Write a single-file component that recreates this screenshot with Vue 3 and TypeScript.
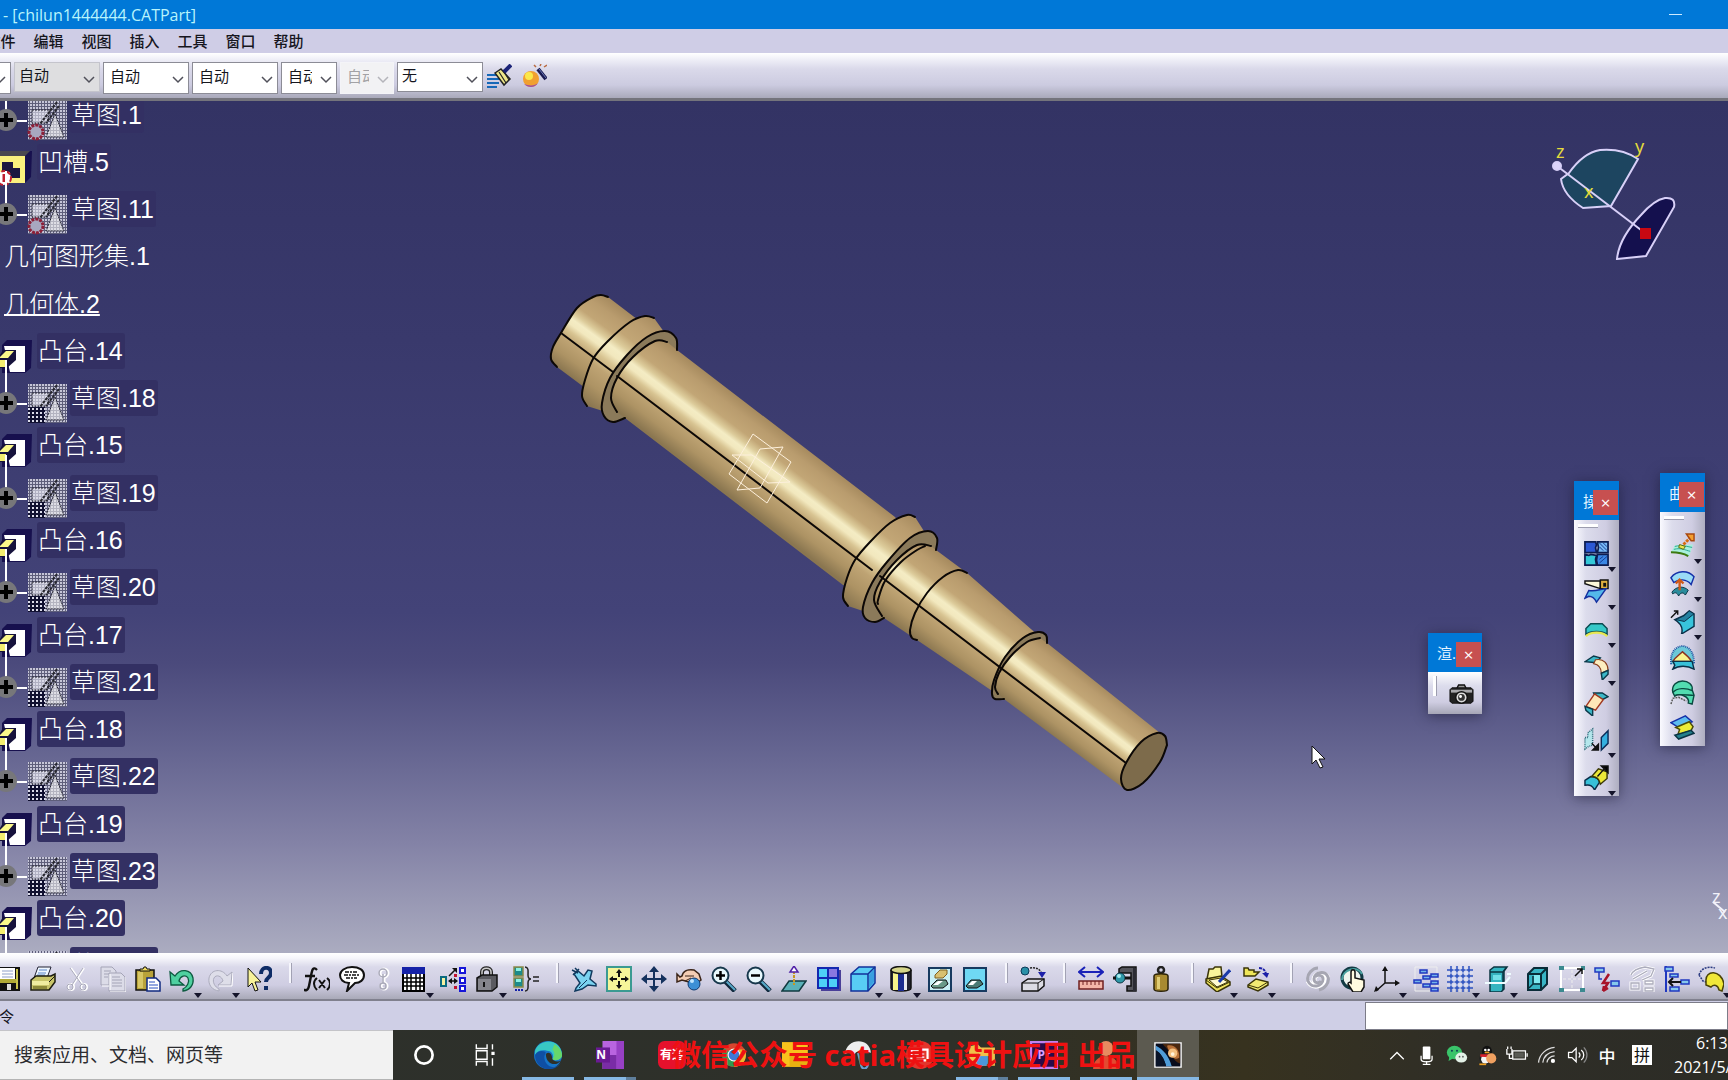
<script setup lang="ts">
type Point = [number, number]

interface Tool {
  icon: string
  label: string
  menu?: boolean
  narrow?: boolean
}

interface TreeRow {
  kind: 'sketch' | 'boss' | 'pocket' | 'set' | 'body'
  label: string
  alert?: boolean
}

interface TaskItem {
  icon: string
  label: string
  state?: 'open' | 'stacked' | 'active'
}

const menus: string[] = ['文件', '编辑', '视图', '插入', '工具', '窗口', '帮助']

const combos = [
  { label: '填充', value: '', size: 'cut' },
  { label: '颜色', value: '自动', size: 'grey' },
  { label: '透明度', value: '自动', size: 'wide' },
  { label: '线宽', value: '自动', size: 'wide' },
  { label: '线型', value: '自动', size: 'small' },
  { label: '点', value: '自动', size: 'off' },
  { label: '图层', value: '无', size: 'last' },
]

const tree: TreeRow[] = [
  { kind: 'sketch', label: '草图.1', alert: true },
  { kind: 'pocket', label: '凹槽.5' },
  { kind: 'sketch', label: '草图.11', alert: true },
  { kind: 'set', label: '几何图形集.1' },
  { kind: 'body', label: '几何体.2' },
  { kind: 'boss', label: '凸台.14' },
  { kind: 'sketch', label: '草图.18' },
  { kind: 'boss', label: '凸台.15' },
  { kind: 'sketch', label: '草图.19' },
  { kind: 'boss', label: '凸台.16' },
  { kind: 'sketch', label: '草图.20' },
  { kind: 'boss', label: '凸台.17' },
  { kind: 'sketch', label: '草图.21' },
  { kind: 'boss', label: '凸台.18' },
  { kind: 'sketch', label: '草图.22' },
  { kind: 'boss', label: '凸台.19' },
  { kind: 'sketch', label: '草图.23' },
  { kind: 'boss', label: '凸台.20' },
  { kind: 'sketch', label: '草图.24' },
]

const groups: Tool[][] = [
  [
    { icon: 'save', label: '保存' },
    { icon: 'print', label: '打印' },
    { icon: 'cut', label: '剪切' },
    { icon: 'copy', label: '复制' },
    { icon: 'paste', label: '粘贴' },
    { icon: 'undo', label: '撤消', menu: true },
    { icon: 'redo', label: '重做', menu: true },
    { icon: 'help', label: '这是什么' },
  ],
  [
    { icon: 'fx', label: '公式' },
    { icon: 'bubble', label: '注释' },
    { icon: 'link', label: '链接', narrow: true },
    { icon: 'table', label: '设计表', menu: true },
    { icon: 'relations', label: '关系' },
    { icon: 'lock', label: '锁定', menu: true },
    { icon: 'equivalent', label: '等效尺寸' },
  ],
  [
    { icon: 'fly', label: '飞行模式' },
    { icon: 'fit', label: '全部适应' },
    { icon: 'pan', label: '平移' },
    { icon: 'rotate', label: '旋转' },
    { icon: 'zoomIn', label: '放大' },
    { icon: 'zoomOut', label: '缩小' },
    { icon: 'normal', label: '法线视图' },
    { icon: 'multi', label: '多视图' },
    { icon: 'iso', label: '等轴测视图', menu: true },
    { icon: 'shading', label: '着色', menu: true },
    { icon: 'hide', label: '隐藏/显示' },
    { icon: 'swap', label: '交换可视空间' },
  ],
  [{ icon: 'catalog', label: '应用材料' }],
  [
    { icon: 'ruler', label: '测量间距' },
    { icon: 'caliper', label: '测量项' },
    { icon: 'weight', label: '测量惯量' },
  ],
  [
    { icon: 'boxPen', label: '目录', menu: true },
    { icon: 'boxOpen', label: '选择', menu: true },
  ],
  [
    { icon: 'update', label: '全部更新' },
    { icon: 'manual', label: '手动更新' },
    { icon: 'axis', label: '轴系统', menu: true },
    { icon: 'bricks', label: '平均尺寸' },
    { icon: 'grid', label: '工作支持面', menu: true },
    { icon: 'section', label: '截面', menu: true },
    { icon: 'cubeDark', label: '仅当前几何体' },
    { icon: 'frame', label: '捕捉' },
    { icon: 'break', label: '隔离' },
    { icon: 'handOff', label: '选择' },
    { icon: 'nodes', label: '工作对象' },
    { icon: 'surface', label: '曲面', menu: true },
  ],
]

const palettes = [
  {
    id: 'render',
    title: '渲...',
    tools: [{ icon: 'camera', label: '照相机' }] as Tool[],
  },
  {
    id: 'operations',
    title: '操作',
    tools: [
      { icon: 'join', label: '接合', menu: true },
      { icon: 'split', label: '分割', menu: true },
      { icon: 'extract', label: '提取', menu: true },
      { icon: 'fillet', label: '圆角', menu: true },
      { icon: 'chamfer', label: '倒角' },
      { icon: 'translate', label: '平移', menu: true },
      { icon: 'extrapolate', label: '外插延伸', menu: true },
    ] as Tool[],
  },
  {
    id: 'surfaces',
    title: '曲面',
    tools: [
      { icon: 'extrude', label: '拉伸', menu: true },
      { icon: 'offset', label: '偏移', menu: true },
      { icon: 'sweep', label: '扫掠', menu: true },
      { icon: 'fill', label: '填充' },
      { icon: 'loft', label: '多截面曲面' },
      { icon: 'blend', label: '桥接' },
    ] as Tool[],
  },
]

const tasks: TaskItem[] = [
  { icon: 'cortana', label: 'Cortana' },
  { icon: 'taskview', label: '任务视图' },
  { icon: 'edge', label: 'Edge', state: 'open' },
  { icon: 'onenote', label: 'OneNote', state: 'stacked' },
  { icon: 'youdao', label: '有道' },
  { icon: 'chrome', label: 'Chrome' },
  { icon: 'notes', label: '便笺' },
  { icon: 'umbrella', label: '天气' },
  { icon: 'reader', label: '阅读' },
  { icon: 'explorer', label: '资源管理器', state: 'stacked' },
  { icon: 'premiere', label: 'Premiere', state: 'open' },
  { icon: 'person', label: '联系人', state: 'open' },
  { icon: 'catia', label: 'CATIA', state: 'active' },
]

const tray = [
  { icon: 'chevronUp', label: '显示隐藏的图标' },
  { icon: 'mic', label: '麦克风' },
  { icon: 'wechat', label: '微信' },
  { icon: 'qq', label: 'QQ' },
  { icon: 'battery', label: '电池' },
  { icon: 'wifi', label: '网络' },
  { icon: 'volume', label: '音量' },
]

const icons: Record<string, string> = {
  save: '<path d="M0 1h25v24H3l-3-3z" fill="#111"/><path d="M2 3h3v20H3l-1-1zM21 3h2v20h-2z" fill="#c8c34a"/><path d="M5 2h15v11H5z" fill="#fff"/><path d="M7 5h11M7 8h11M7 11h11" stroke="#8fa0c8"/><path d="M5 13h16v4H5z" fill="#b0aa36"/><path d="M12 18h4v6h-4z" fill="#ddd"/>',
  print: '<path d="M8 1l13 0-4 11-13 0z" fill="#eef6ff" stroke="#223" /><path d="M9 4h8M8 7h8M7 9h8" stroke="#5b86c8"/><path d="M1 14l5-4h15l4-2v8l-6 8H1z" fill="#c9c56a" stroke="#1c1c10" stroke-width="1.5"/><path d="M2 15h17v4H2z" fill="#f0eda0"/><path d="M3 20h14v3H3z" fill="#8d8a3a"/><path d="M19 16l6-6" stroke="#1c1c10"/>',
  cut: '<g fill="none" stroke="#fff" stroke-width="2"><path d="M6 2l12 17M19 2L8 19"/><circle cx="6" cy="21" r="3"/><circle cx="19" cy="21" r="3"/></g><g fill="none" stroke="#a9a9ba"><path d="M5 2l12 17M18 2L7 19"/><circle cx="5" cy="21" r="3"/><circle cx="18" cy="21" r="3"/></g>',
  copy: '<g fill="#dcdce8" stroke="#a4a4b6"><path d="M1 1h11l4 4v14H1z"/><path d="M9 7h12l4 4v14H9z"/></g><path d="M4 5h7M4 8h5M4 11h4M12 11h8M12 14h10M12 17h10M12 20h10" stroke="#a4a4b6"/><path d="M2 20h7M10 26h16V11M10 8v16" stroke="#fff" fill="none"/>',
  paste: '<path d="M1 4h18v20H1z" fill="#b9a33a" stroke="#111" stroke-width="1.5"/><path d="M3 6h5v16H3z" fill="#d8c766"/><path d="M5 5h10V3h-3l-1-2H9L8 3H5z" fill="#f0dc60" stroke="#111"/><path d="M12 12h9l4 4v9H12z" fill="#fff" stroke="#102a80" stroke-width="1.5"/><path d="M14 16h6M14 19h9M14 22h9" stroke="#2850c0"/>',
  undo: '<path d="M1 6l1 13h13l-5-4c1-5 7-7 9-3 2 4-1 9-5 11v2c7-1 11-6 10-13C22 3 11 2 6 10z" fill="#4fd0a0" stroke="#0d5a40" stroke-width="1.3"/>',
  redo: '<path d="M25 6l-1 13H11l5-4c-1-5-7-7-9-3-2 4 1 9 5 11v2C5 24 1 19 2 12 4 3 15 2 20 10z" fill="#dedee9" stroke="#acacbd"/><path d="M26 7l-1 13H12" stroke="#fff" fill="none"/>',
  help: '<path d="M2 2v19l4-4 3 8 3-1-3-8h6z" fill="#f7f29a" stroke="#111"/><path d="M15 8c0-8 10-8 10-1 0 5-5 4-5 9" fill="none" stroke="#0e2c66" stroke-width="4"/><path d="M18 20h4v4h-4z" fill="#0e2c66"/>',
  fx: '<path d="M13 4c-4-4-5 0-6 6L5 20c-1 5-4 5-5 3M1 10h10" stroke="#111" stroke-width="2.4" fill="none"/><path d="M13 12c-4 3-4 8 0 12M23 12c4 3 4 8 0 12M15 14l6 8M21 14l-6 8" stroke="#111" stroke-width="2" fill="none"/>',
  bubble: '<path d="M13 1c7 0 12 3 12 8s-4 8-9 8l-8 8 2-8C4 17 1 13 1 9s5-8 12-8z" fill="#fff" stroke="#111" stroke-width="2"/><path d="M6 6h13M5 9h15M7 12h11" stroke="#111" stroke-width="1.5" stroke-dasharray="4 1 2 1"/>',
  link: '<g fill="none" stroke="#fff" stroke-width="3"><circle cx="14" cy="7" r="4"/><circle cx="14" cy="20" r="3"/><path d="M14 8v9"/></g><g fill="none" stroke="#a8a8b8" stroke-width="1.5"><circle cx="13" cy="7" r="4"/><circle cx="13" cy="20" r="3"/><path d="M13 8v9"/></g>',
  table: '<path d="M2 2h21v23H2z" fill="#fff" stroke="#000" stroke-width="2"/><path d="M1 1h23v7H1z" fill="#1522a8"/><path d="M2 12h21M2 16h21M2 20h21M6 8v17M10 8v17M15 8v17M19 8v17" stroke="#000" stroke-width="1.5"/>',
  relations: '<path d="M1 11h5v9H1z" fill="#f4f1a0" stroke="#0a6a80" stroke-width="2"/><path d="M9 15h8M9 10l7-7" stroke="#111" stroke-width="1.5"/><path d="M12 2h5v5zM8 15l4-3v6zM18 15l-4-3v6z" fill="#111"/><g fill="#fff" stroke="#1616d8" stroke-width="2"><path d="M20 2h5v5h-5zM20 12h5v5h-5zM20 20h5v5h-5z"/></g><path d="M14 8h3v3h-3zM14 20h3v3h-3z" fill="#c01030"/>',
  lock: '<path d="M8 11V6c0-5 9-5 9 0v6" fill="none" stroke="#222" stroke-width="4"/><path d="M8 11V6c0-5 9-5 9 0v6" fill="none" stroke="#ccc" stroke-width="1.5"/><path d="M3 12l5-3h15v12l-5 4H3z" fill="#5a5a60" stroke="#111" stroke-width="1.5"/><path d="M4 13h13v11H4z" fill="#85858c"/><path d="M10 16v5" stroke="#111" stroke-width="2"/>',
  equivalent: '<path d="M1 1h9v9H1zM1 12h9v9H1z" fill="#1c8a8a" stroke="#8a8a4a" stroke-width="1.5"/><path d="M3 2h5v3H3zM3 13h5v3H3z" fill="#8af0e0"/><path d="M2 24h8" stroke="#1522a8" stroke-width="2" stroke-dasharray="2 1"/><path d="M12 1c4 0 3 5 3 8s1 4 3 4c-2 0-3 1-3 4s1 8-3 8" fill="none" stroke="#222" stroke-width="1.5"/><path d="M20 11h6M20 15h6" stroke="#222" stroke-width="1.5"/>',
  fly: '<path d="M3 8l4-3 6 5 4-6 4 1-2 8 6 5v2l-8-1-6 4-7 2 1-3 4-5z" fill="#7ad2f0" stroke="#10395e" stroke-width="1.5"/><path d="M1 4l6 3M2 9l6-6M4 2l3 3" stroke="#10395e" stroke-width="1.5"/><path d="M8 22l8-8" stroke="#10395e"/>',
  fit: '<path d="M1 1h24v24H1z" fill="#f6f59a" stroke="#3b9a92" stroke-width="2"/><path d="M13 3l3 4h-2v4h-2V7h-2zM13 23l3-4h-2v-4h-2v4h-2zM3 13l4-3v2h4v2H7v2zM23 13l-4-3v2h-4v2h4v2z" fill="#111"/>',
  pan: '<path d="M13 0l5 6h-4v6h6V8l6 5-6 5v-4h-6v6h4l-5 6-5-6h4v-6H6v4l-6-5 6-5v4h6V6H8z" fill="#15325e"/>',
  rotate: '<path d="M1 8l3 3 2-1c1-5 6-7 12-6l5 4 2 6-4 3-8-1-7-2-5 2z" fill="#f4cdb4" stroke="#3a2418" stroke-width="1.5"/><path d="M9 10h9M9 15l6-3" stroke="#3a2418" fill="none"/><circle cx="18" cy="18" r="6" fill="#3c8fd6" stroke="#103a70"/><circle cx="16" cy="15" r="2" fill="#bfe4ff"/>',
  zoomIn: '<path d="M14 15l10 10" stroke="#10283c" stroke-width="5"/><path d="M15 15l9 9" stroke="#58a8c8" stroke-width="2"/><circle cx="9.500" cy="9.500" r="8" fill="#e8f8fc" stroke="#17384c" stroke-width="2"/><path d="M9.500 5v9M5 9.500h9" stroke="#000" stroke-width="2.500"/>',
  zoomOut: '<path d="M14 15l10 10" stroke="#10283c" stroke-width="5"/><path d="M15 15l9 9" stroke="#58a8c8" stroke-width="2"/><circle cx="9.500" cy="9.500" r="8" fill="#e8f8fc" stroke="#17384c" stroke-width="2"/><path d="M5 9.500h9" stroke="#000" stroke-width="2.500"/>',
  normal: '<path d="M8 15h17l-7 10H1z" fill="#5ab0b8" stroke="#113a40" stroke-width="1.500"/><path d="M13 5v14" stroke="#c89820" stroke-width="2" stroke-dasharray="3 1"/><path d="M13 0l4 6H9z" fill="#fff" stroke="#5020a8" stroke-width="1.500"/>',
  multi: '<path d="M5 4h20v21H5z" fill="#4a3f98"/><path d="M2 2h20v20H2z" fill="#4ed0f6" stroke="#1428b0" stroke-width="2"/><path d="M13 3h8v9h-8z" fill="#8a78e0"/><path d="M12 2v20M2 12h20" stroke="#1428b0" stroke-width="2"/>',
  iso: '<path d="M1 8l8-7h16v16l-7 8H1z" fill="#58cdf5" stroke="#12309a" stroke-width="1.500"/><path d="M1 8h17v17M18 8l7-7" fill="none" stroke="#12309a" stroke-width="1.500"/><path d="M19 9l5-6v13l-5 6z" fill="#3a9fe0"/>',
  shading: '<path d="M3 4v18c0 4 20 4 20 0V4" fill="#223" stroke="#111" stroke-width="1.500"/><path d="M5 7h5v17H5z" fill="#f6f28a"/><path d="M10 8h6v17h-6z" fill="#1c2c90"/><path d="M16 8h3v16h-3z" fill="#e8e8f0"/><ellipse cx="13" cy="4" rx="10" ry="3.500" fill="#d5d58a" stroke="#111" stroke-width="1.500"/>',
  hide: '<path d="M2 2h22v23H2z" fill="#c8f0f4" stroke="#173a60" stroke-width="2"/><path d="M8 9l5-5h7v4l-4 4H8z" fill="#d8c070" stroke="#806020"/><path d="M4 20l6-6h9l2 4-5 4H6z" fill="#6a9a88" stroke="#111"/><path d="M6 19l5-4h5l-5 4z" fill="#fff"/>',
  swap: '<path d="M2 2h22v23H2z" fill="#6fd8f4" stroke="#173a60" stroke-width="2"/><path d="M4 20l5-6h9l3 4-6 4H6z" fill="#4a7a74" stroke="#111"/><path d="M6 19l4-4h5l-4 4z" fill="#fff"/>',
  catalog: '<circle cx="5" cy="5" r="4" fill="#2a90a8" stroke="#0c3a58"/><path d="M10 2c6-1 10 1 12 6" fill="none" stroke="#222" stroke-width="1.500" stroke-dasharray="2 1"/><path d="M18 6h8l-4 6z" fill="#1c20a8"/><path d="M2 17l6-4h16v7l-6 5H2z" fill="#dcdce4" stroke="#111" stroke-width="1.500"/><path d="M2 17h16v8M18 17l6-4" stroke="#111" fill="none"/>',
  ruler: '<path d="M2 6h22" stroke="#1a22b8" stroke-width="2"/><path d="M7 1L1 6l6 5M19 1l6 5-6 5" fill="none" stroke="#1a22b8" stroke-width="2"/><path d="M1 15h24v8H1z" fill="#f4b6a8" stroke="#702020" stroke-width="1.500"/><path d="M5 15v4M9 15v4M13 15v4M17 15v4M21 15v4" stroke="#702020"/>',
  caliper: '<path d="M6 6V3l3-2h14v24h-9v-5h4V7H6z" fill="#55555c" stroke="#111" stroke-width="1.500"/><path d="M20 2h3v23h-3z" fill="#2c2c34"/><circle cx="7" cy="12" r="5" fill="#2f98a8" stroke="#0c3444"/><circle cx="6" cy="10" r="2" fill="#a8ecf0"/><path d="M0 12h3M12 12h6" stroke="#111" stroke-width="3"/>',
  weight: '<circle cx="13" cy="4" r="3" fill="none" stroke="#222" stroke-width="2.500"/><path d="M6 10c0-3 14-3 14 0v13c0 3-14 3-14 0z" fill="#a88a30" stroke="#2a2208" stroke-width="1.500"/><path d="M9 11h3v12H9z" fill="#e0cc74"/>',
  boxPen: '<path d="M2 13l2-10 4 0 2-2 6 0 1 10z" fill="#f8f49a" stroke="#3a3408" stroke-width="1.500"/><path d="M1 13l15-3 9 6v3l-13 7-11-9z" fill="#eee35c" stroke="#3a3408" stroke-width="1.500"/><path d="M4 14l12-2 7 4-11 5z" fill="#fffbd0" stroke="#3a3408"/><path d="M1 14l11 8 13-6" fill="none" stroke="#3a3408"/><path d="M25 4L14 16" stroke="#1a3aa8" stroke-width="3"/>',
  boxOpen: '<path d="M1 10V2h4l1 2h5v2h5l-4 4z" fill="#efe65a" stroke="#3a3408" stroke-width="1.500"/><path d="M16 2c4 0 6 2 7 6" fill="none" stroke="#1c20a8" stroke-width="2" stroke-dasharray="3 1"/><path d="M19 7h7l-2 5z" fill="#1c20a8"/><path d="M5 19l8-6 12 3v3l-10 6-10-4z" fill="#f2ea72" stroke="#3a3408" stroke-width="1.500"/><path d="M5 19l10 3 10-6" fill="none" stroke="#3a3408"/>',
  update: '<g fill="none" stroke="#fff" stroke-width="5"><path d="M17 16c-1 4-8 3-8-2 0-7 11-9 14-2"/><path d="M10 11c2-4 9-3 9 2 0 8-12 10-16 2"/></g><g fill="none" stroke="#a6a6b2" stroke-width="3"><path d="M16 15c-2 3-7 2-7-2 0-7 11-9 14-2 2 6-4 12-9 13"/><path d="M10 11c2-3 8-2 8 2 0 8-12 10-15 2C1 8 8 2 13 2"/></g>',
  manual: '<circle cx="12" cy="12" r="10" fill="#eef4ee" stroke="#123a44" stroke-width="3"/><path d="M2 14C2 3 18-1 22 8" fill="none" stroke="#4aa0a0" stroke-width="2"/><path d="M11 16V6c0-3 4-3 4 0v6l9 2v7l-3 5h-8l-5-8c0-2 2-2 3-1z" fill="#fffbe0" stroke="#111" stroke-width="1.500"/>',
  axis: '<path d="M11 2v15h13M11 17l-9 8" fill="none" stroke="#111" stroke-width="1.500"/><path d="M11 0l3 5H8zM26 17l-5 3v-6zM0 26l2-6 3 4z" fill="#111"/>',
  bricks: '<path d="M2 1h22v24H2z" fill="none" stroke="#eee"/><g fill="#74b4ea" stroke="#2038c0" stroke-width="1.500"><path d="M7 4h7v3H7zM10 10h7v3h-7zM18 8h7v3h-7zM1 14h7v3H1zM18 15h7v3h-7zM10 18h7v3h-7zM18 22h7v3h-7z"/></g>',
  grid: '<path d="M0 4h26M0 10h26M0 16h26M0 22h26M4 0v26M10 0v26M16 0v26M22 0v26" stroke="#2a50c0" stroke-width="1.500"/><path d="M0 7h26M0 13h26M0 19h26M7 0v26M13 0v26M19 0v26" stroke="#dfe6fa"/>',
  section: '<path d="M5 4l4-3h13l-3 4v18l-3 3H5z" fill="#35b4c0" stroke="#0a3440" stroke-width="1.500"/><path d="M5 6h13v18M18 6l3-4" fill="none" stroke="#0a3440" stroke-width="1.500"/><path d="M0 17h20l5-6M22 8h4" stroke="#eefcff" stroke-width="2" fill="none"/><path d="M8 9h8v5H8z" fill="#72e0e8"/>',
  cubeDark: '<path d="M4 8l6-6h13v16l-6 6H4z" fill="#38b4c4" stroke="#0a2c38" stroke-width="2"/><path d="M4 8h13v16M17 8l6-6" fill="none" stroke="#0a2c38" stroke-width="2"/><path d="M5 22l4-4V10M9 18h7" fill="none" stroke="#0a2c38" stroke-width="1.500"/><path d="M10 9h6v8h-6z" fill="#80e8f0"/>',
  frame: '<path d="M2 2h22v22H2z" fill="none" stroke="#fff" stroke-width="2"/><path d="M13 4v18M4 13h18" stroke="#eee" stroke-dasharray="3 2"/><path d="M0 0h5v4H0zM0 22h5v4H0zM21 22h5v4h-5zM22 0h4v4h-4z" fill="#3c8a90"/><path d="M16 10l7-7M18 3h5v5" fill="none" stroke="#111" stroke-width="1.500"/>',
  break: '<path d="M1 2h9v4H1zM17 15h8v5h-8z" fill="#86c8ec" stroke="#2038c0" stroke-width="1.500"/><path d="M5 6v7h3" fill="none" stroke="#2038c0" stroke-width="1.500"/><path d="M15 8l-6 9h5l-5 8M9 25l1-5M9 25l5-3" fill="none" stroke="#a81428" stroke-width="2.500"/>',
  handOff: '<g fill="none" stroke="#fff" stroke-width="3"><path d="M2 9c2-5 8-7 14-8l9 2-3 7-9 4M4 13l14-8M2 17h8v6H2zM16 15h8v3h-8zM16 22h8v3h-8z"/></g><g fill="none" stroke="#acacbc" stroke-width="1.300"><path d="M2 9c2-5 8-7 14-8l9 2-3 7-9 4M4 13l14-8M2 17h8v6H2zM16 15h8v3h-8zM16 22h8v3h-8z"/></g>',
  nodes: '<path d="M2 0v26" stroke="#2038c0" stroke-width="2"/><path d="M1 1h8v4H1zM6 8h8v3H6zM17 14h8v4h-8zM6 21h9v4H6z" fill="#86c8ec" stroke="#2038c0" stroke-width="1.500"/><path d="M17 16H5M9 12l-4 4 4 4" fill="none" stroke="#111" stroke-width="2"/>',
  surface: '<path d="M1 9c2-7 9-9 16-7M1 9l4 6 3 1" fill="none" stroke="#2a3a80" stroke-width="1.500" stroke-dasharray="2 1"/><path d="M8 15c-1-11 15-12 18 3l-2 7-3-1c-1-5-5-6-8-3l-5-2z" fill="#f0e838" stroke="#4a4408" stroke-width="1.500"/>',
  camera: '<path d="M8 6l2-4h6l2 4" fill="#999" stroke="#111" stroke-width="1.500"/><path d="M1 7l2-2h20l2 2v12l-2 2H3l-2-2z" fill="#222" stroke="#111"/><path d="M2 7h22v3H2z" fill="#a8a8ac"/><circle cx="13" cy="15" r="6" fill="#ddd" stroke="#111" stroke-width="1.500"/><circle cx="13" cy="15" r="3.500" fill="#333"/><circle cx="12" cy="14" r="1.500" fill="#fff"/>',
  join: '<g stroke="#0c1c50" stroke-width="1.800"><path d="M1 1h11l1 3-1 3 1 5H1z" fill="#2c58d4"/><path d="M14 1h11v11H14l1-5z" fill="#78b8f4"/><path d="M1 14l4 1 2-1 6 1-1 4 1 6H1z" fill="#34c8d8"/><path d="M14 14h11v11H14l-1-5z" fill="#3a86e4"/></g><path d="M16 2l8 8M20 2l4 4M16 6l4 4M16 23l8-7M16 19l4-3" stroke="#173a90"/>',
  split: '<path d="M1 2l16 0v8L1 5z" fill="#fdf8d8" stroke="#111" stroke-width="1.500"/><path d="M17 1h8v9h-8z" fill="#e0b040" stroke="#111" stroke-width="1.500"/><path d="M20 4h3v4h-3z" fill="#111"/><path d="M5 12c8 1 10-1 18-2L13 24c-2-4-4-6-8-6l-4 2z" fill="#54b8ea" stroke="#1430a0" stroke-width="1.500"/>',
  extract: '<path d="M2 18V12l5-5h12l5 5v6c-5-4-17-4-22 0z" fill="#35c8c8" stroke="#0a4a50" stroke-width="1.500"/><path d="M2 20c5-5 17-5 22 0" stroke="#e8e850" stroke-width="2.500" fill="none"/>',
  fillet: '<path d="M1 7l9-6 7 2-4 5z" fill="#3cb8c8" stroke="#0a3a4a" stroke-width="1.500"/><path d="M12 5c9-2 13 5 13 11l-7 3c0-6-3-9-8-10z" fill="#fdeec0" stroke="#8a4020" stroke-width="1.200"/><path d="M25 16v4l-6 6-1-7z" fill="#3cb8c8" stroke="#0a3a4a" stroke-width="1.500"/>',
  chamfer: '<path d="M10 2h9l6 4-6 3-8-5z" fill="#3cb8c8" stroke="#0a3a4a" stroke-width="1.500"/><path d="M11 3l9 6-8 11-10-4z" fill="#fde6b8" stroke="#a03820" stroke-width="1.500"/><path d="M1 16l8 3v7l-7-6z" fill="#3cb8c8" stroke="#0a3a4a" stroke-width="1.500"/>',
  translate: '<path d="M1 23V11h3V6l5-4v17l-4 1z" fill="#b4e6ec" stroke="#2a6a78" stroke-width="1.500" stroke-dasharray="1 1"/><path d="M18 11l7-7v13l-7 7z" fill="#34b0e0" stroke="#0a2c58" stroke-width="1.500"/><path d="M8 17l4 4M15 24h-6l6-6z" stroke="#111" stroke-width="1.500" fill="#111"/>',
  extrapolate: '<path d="M1 16l6-4c6 0 9 3 9 6l-5 8c-2-4-4-6-10-5z" fill="#38c0d8" stroke="#0a2c48" stroke-width="1.500"/><path d="M8 12l7-8 9 3v7l-7 6c-1-5-4-8-9-8z" fill="#ece838" stroke="#3a3808" stroke-width="1.500"/><path d="M14 12l8-9M18 1h7v7z" stroke="#111" stroke-width="1.500"/>',
  extrude: '<path d="M1 20l4-7 19-1-4 12c-6-3-12-4-19-4z" fill="#a8f0dc"/><path d="M5 14c8-2 12 0 18 1M4 17c8-2 12 1 17 2" stroke="#2aa890" fill="none"/><path d="M1 20c8 0 13 1 18 4" stroke="#3c7a10" stroke-width="2" fill="none"/><path d="M10 12l6 2-2 3-5-2z" fill="#e8e850" stroke="#5a6a10"/><path d="M14 12l7-7" stroke="#d86a10" stroke-width="3" stroke-dasharray="3 1"/><path d="M17 1h8v7h-3z" fill="#f4a030" stroke="#a84810" stroke-width="1.500"/>',
  offset: '<path d="M1 7c6-8 18-8 24-1l-3 8C17 8 9 8 4 12z" fill="#9adcf6" stroke="#1430a8" stroke-width="1.500"/><path d="M2 22c4-6 12-7 17-2l-3 5c-2-3-5-3-7 1-2-4-4-4-6-2z" fill="#2a8c9c" stroke="#0a3444"/><path d="M10 20V10M6 13l4-4 4 4" stroke="#d05a18" stroke-width="2.500" fill="none"/>',
  sweep: '<path d="M1 9l7-7M4 2h4v4" stroke="#111" stroke-width="1.500" fill="none"/><path d="M5 11l9-4 6-5 5 3v13l-13 8c2-7-2-12-7-15z" fill="#38c4dc" stroke="#0a3048" stroke-width="1.500"/><path d="M6 11l9-4 5-5 5 3-10 8z" fill="#2480a0" stroke="#0a3048"/>',
  fill: '<path d="M1 20C0 8 5 2 13 1c8 1 12 7 12 19" fill="#6cc8d8" stroke="#1a50a0" stroke-width="2" stroke-dasharray="1 1"/><path d="M3 17c2-4 6-6 10-10 4 4 8 6 9 10z" fill="#f8f490" stroke="#8a3020" stroke-width="1.500"/><path d="M3 17h20l2 8c-7-4-16-4-22 0l2-4z" fill="#38c0d8" stroke="#0a3048" stroke-width="1.500"/>',
  loft: '<path d="M3 13C1 5 8 1 13 1c6 0 11 4 10 9l2 6-2 9-4-1c2-7-10-11-14-7z" fill="#52dcb0" stroke="#0a4a40" stroke-width="1.500"/><path d="M3 13c4-5 14-5 20-2M5 16c6-2 14 0 20 0" fill="none" stroke="#0a4a40" stroke-width="1.500"/><path d="M1 25l2-6 6-1 8 4" fill="none" stroke="#555" stroke-width="1.500" stroke-dasharray="2 1"/>',
  blend: '<path d="M1 8l15-7 7 6-14 6z" fill="#5cbcf0" stroke="#1430a8" stroke-width="1.500"/><path d="M6 13l14-6 4 5-2 4-14 5 2-6z" fill="#ecec38" stroke="#4a4a08" stroke-width="1.500"/><path d="M5 21l17-5 3 3-16 6z" fill="#24808c" stroke="#0a3444" stroke-width="1.500"/>',
  brush: '<path d="M1 11h14M1 15h14M1 19h12M1 23h10" stroke="#1668b8" stroke-width="2"/><path d="M9 9l6-4 9 10-6 6z" fill="#efe88a" stroke="#222" stroke-width="1.500"/><path d="M13 8l7 11M17 6l6 10" stroke="#222" stroke-width="1.200"/><path d="M18 8l7-7" stroke="#1c2478" stroke-width="4"/>',
  wizard: '<circle cx="10" cy="15" r="8" fill="#f0a030"/><circle cx="8" cy="12" r="4" fill="#fbe84a"/><path d="M3 20c4 4 11 4 14-1-3 3-9 3-14 1z" fill="#a050a0"/><path d="M17 5l8 10" stroke="#1a1a50" stroke-width="4"/><path d="M18 5l7 9" stroke="#6a78b8" stroke-width="1"/><path d="M15 3l-2-2M19 2l1-2M23 3l3-2" stroke="#b86a40" stroke-width="1.500"/>',
  cortana: '<circle cx="13" cy="13" r="8" fill="none" stroke="#fff" stroke-width="2.500"/>',
  taskview: '<path d="M4 3v4h10V3M4 23v-4h10v4M4 9h10v8H4zM19 3v5M19 16v7" fill="none" stroke="#fff" stroke-width="1.300"/><path d="M18 10h3v3h-3z" fill="#fff"/>',
  edge: '<circle cx="13" cy="13" r="13" fill="#1674c8"/><path d="M1 9C4-2 24-4 26 12c0 5-5 7-9 5 2-3 0-8-5-8-5-1-9 0-11 4z" fill="#38c8c4"/><path d="M19 3c5 3 7 7 7 10 0 4-5 6-9 4 2-2 3-6 0-9z" fill="#66d86a"/><path d="M1 13c3-5 9-4 10-2-3 4-1 11 5 13 4 1 7-1 9-4-5 10-24 8-24-7z" fill="#0f4fa4"/><path d="M11 12c3-3 6 0 6 5 3 3 6 2 8 1-4 6-14 4-14-6z" fill="#2e3029"/>',
  onenote: '<path d="M6 0h20v26H6z" fill="#b964e0"/><path d="M19 0h7v26h-7z" fill="#9740c4"/><path d="M6 13h13v13H6z" fill="#7a2ca6"/><path d="M0 6h13v14H0z" fill="#6a1a94"/>',
  youdao: '<rect x="0" y="0" width="26" height="26" rx="6" fill="#e6112c"/>',
  chrome: '<circle cx="13" cy="13" r="11" fill="#d8452f"/><path d="M13 13L4 7c-5 9 1 17 9 17z" fill="#2f9a50"/><path d="M13 24c10 0 13-10 10-16H13z" fill="#edb92d"/><circle cx="13" cy="13" r="6" fill="#fff"/><circle cx="13" cy="13" r="5" fill="#3f78d8"/>',
  notes: '<path d="M0 1h24v23H0z" fill="#f9c21c"/><path d="M7 13h17v11H7z" fill="#e8b010"/>',
  umbrella: '<path d="M1 12C2-3 24-4 25 11c-4-2-6-1-8 1-2-3-5-3-7 0-3-2-6-2-9 0z" fill="#eee"/><path d="M13 11l3 12c1 4 6 3 6-1" stroke="#68a0d0" stroke-width="2" fill="none"/>',
  reader: '<circle cx="13" cy="13" r="13" fill="#e3352c"/><path d="M5 8h15v10H5z" fill="none" stroke="#fff" stroke-width="2"/><path d="M8 12h9M8 15h9" stroke="#fff"/>',
  explorer: '<path d="M1 5l8-2 3 3h13v17H1z" fill="#f2c04a"/><path d="M8 14h12v9H8z" fill="#4b98dc"/>',
  premiere: '<path d="M1 1h24v24H1z" fill="#2a0a4a" stroke="#c080f0" stroke-width="2"/>',
  person: '<circle cx="13" cy="7" r="7" fill="#e88a60"/><path d="M1 26c0-16 24-16 24 0z" fill="#e24a30"/>',
  catia: '<path d="M1 1h28v26H1z" fill="#080c1c" stroke="#fff" stroke-width="1.500"/><path d="M9 2h19v21c-4-1-6-3-8-7-3-6-6-8-11-14z" fill="#4a2810"/><path d="M14 4c8-2 14 5 13 13-3 2-6 1-7-2-3-5-5-6-6-11z" fill="#b87038"/><circle cx="20" cy="12" r="5" fill="#f4c080"/><circle cx="20" cy="13" r="2" fill="#fff4dc"/><path d="M2 4c8 4 14 11 17 22h-6C11 18 7 12 2 9z" fill="#4f9cd8"/><path d="M2 9c5 3 9 9 11 17H2z" fill="#0a1428"/>',
  chevronUp: '<path d="M5 18l8-8 8 8" fill="none" stroke="#fff" stroke-width="1.500"/>',
  mic: '<rect x="8" y="3" width="9" height="15" rx="1" fill="#fff"/><path d="M6 14v4c0 4 13 4 13 0v-4M12.500 20v4M8 24h9" fill="none" stroke="#fff" stroke-width="1.500"/>',
  wechat: '<ellipse cx="10" cy="10" rx="9" ry="8" fill="#3ac46a"/><path d="M4 15l-1 5 5-3z" fill="#3ac46a"/><circle cx="7" cy="8" r="1.200" fill="#145"/><circle cx="13" cy="8" r="1.200" fill="#145"/><ellipse cx="18" cy="16" rx="7" ry="6" fill="#e4f2e8"/><circle cx="16" cy="15" r="1" fill="#555"/><circle cx="20" cy="15" r="1" fill="#555"/>',
  qq: '<ellipse cx="13" cy="9" rx="6" ry="7" fill="#111"/><ellipse cx="12" cy="17" rx="8" ry="7" fill="#222"/><ellipse cx="11" cy="18" rx="5" ry="5" fill="#f4f4f4"/><path d="M5 12h15v4L5 15z" fill="#d8202c"/><circle cx="11" cy="7" r="1.500" fill="#fff"/><circle cx="15" cy="7" r="1.500" fill="#fff"/><ellipse cx="13" cy="10" rx="3" ry="1" fill="#f0a020"/><circle cx="18" cy="17" r="6" fill="#f0a060"/><path d="M4 23h8v2H4z" fill="#f0a020"/>',
  battery: '<path d="M8 8h15v10H8zM25 11v4" fill="none" stroke="#fff" stroke-width="1.500"/><path d="M10 10h11v6H10z" fill="#5a5b55"/><path d="M1 6v6h6V6M2 3v3M6 3v3M4 12v5h4" fill="none" stroke="#fff" stroke-width="1.500"/>',
  wifi: '<g fill="none" stroke="#ddd" stroke-width="1.500"><path d="M3 22C4 12 12 5 22 4"/><path d="M8 22c1-7 6-12 14-13"/><path d="M13 22c0-4 4-8 9-8"/></g><circle cx="20" cy="20" r="2.500" fill="#fff"/>',
  volume: '<path d="M3 10h4l5-5v16l-5-5H3z" fill="none" stroke="#fff" stroke-width="1.500"/><path d="M15 10c2 2 2 4 0 6M18 7c4 3 4 9 0 12" fill="none" stroke="#fff" stroke-width="1.500"/><path d="M21 4c5 5 5 13 0 18" fill="none" stroke="#888" stroke-width="1.500"/>',
}

const iconText: Record<string, string> = { onenote: 'N', youdao: '有道', premiere: 'Pr' }

/** Smooth open curve through a list of points (Catmull-Rom turned into cubic segments). */
function curve(points: Point[], start = 'M'): string {
  let d = `${start}${points[0][0]} ${points[0][1]}`
  for (let i = 0; i < points.length - 1; i++) {
    const a = points[Math.max(i - 1, 0)]
    const b = points[i]
    const c = points[i + 1]
    const e = points[Math.min(i + 2, points.length - 1)]
    d += `C${b[0] + (c[0] - a[0]) / 6} ${b[1] + (c[1] - a[1]) / 6} ${c[0] - (e[0] - b[0]) / 6} ${c[1] - (e[1] - b[1]) / 6} ${c[0]} ${c[1]}`
  }
  return d
}

const headArc: Point[] = [[608, 297], [601, 295], [593, 297], [577, 308], [561, 333], [553, 347], [551, 359], [557, 367]]
const collarBack: Point[] = [[654, 318], [645, 316], [630, 322], [607, 342], [593, 359], [585, 380], [582, 396], [587, 406]]
const collarFront: Point[] = [[677, 350], [676, 338], [665, 331], [647, 337], [627, 355], [610, 378], [602, 403], [604, 416], [613, 422], [625, 418]]
const collarInner: Point[] = [[667, 342], [655, 341], [633, 357], [617, 378], [611, 398], [617, 412]]
const ringBack: Point[] = [[915, 517], [907, 515], [890, 523], [870, 542], [855, 560], [847, 578], [843, 597], [848, 606]]
const ringFront: Point[] = [[936, 550], [937, 538], [928, 531], [910, 538], [887, 562], [872, 583], [863, 607], [865, 618], [875, 622], [884, 618]]
const ringInner: Point[] = [[931, 546], [917, 545], [897, 560], [880, 582], [874, 600], [882, 616]]
const ringGroove: Point[] = [[925, 546], [917, 550], [901, 562], [885, 581], [878, 600], [878, 604]]
const stepArc: Point[] = [[967, 573], [958, 570], [943, 577], [927, 593], [915, 613], [910, 630], [912, 638], [917, 640]]
const neckArc: Point[] = [[1047, 643], [1046, 635], [1038, 632], [1023, 638], [1005, 657], [994, 680], [992, 694], [995, 699], [1004, 699]]
const neckInner: Point[] = [[1040, 638], [1027, 642], [1010, 657], [999, 673], [995, 687], [998, 694]]
const tailFace: Point[] = [[1167, 745], [1165, 736], [1157, 733], [1141, 742], [1126, 763], [1121, 779], [1127, 790], [1143, 783], [1160, 762], [1167, 745]]

const shaft = [
  { fill: 'url(#g-head)', d: curve(headArc) + 'L596 396L646 326Z' },
  { fill: 'url(#g-collar)', d: curve(collarBack) + curve([...collarFront].reverse(), 'L') + 'Z' },
  { fill: '#8b7a5a', d: curve(collarFront) + 'Z' },
  { fill: 'url(#g-main)', d: curve(collarInner) + 'L625 418L843 585L870 590L905 530L895 517L677 350Z' },
  { fill: 'url(#g-ring)', d: curve(ringBack) + curve([...ringFront].reverse(), 'L') + 'Z' },
  { fill: '#8b7a5a', d: curve(ringFront) + 'Z' },
  { fill: 'url(#g-step)', d: curve(ringInner) + 'L884 618L917 640L967 573L936 550Z' },
  { fill: 'url(#g-body)', d: curve(stepArc) + curve([...neckArc].reverse(), 'L') + 'Z' },
  { fill: '#8b7a5a', d: curve(neckArc) + 'Z' },
  { fill: 'url(#g-tail)', d: curve(neckInner) + 'L1004 699L1122 787L1144 760L1160 733L1047 643Z' },
]

const outlines: string[] = [
  headArc, collarBack, collarFront, collarInner, ringBack, ringFront, ringInner, ringGroove,
  stepArc, neckArc, neckInner,
].map((p) => curve(p))

const gradients = [
  { id: 'g-head', x1: 608, y1: 297, x2: 557, y2: 367 },
  { id: 'g-collar', x1: 666, y1: 325, x2: 599, y2: 413 },
  { id: 'g-main', x1: 677, y1: 350, x2: 626, y2: 417 },
  { id: 'g-ring', x1: 925, y1: 524, x2: 858, y2: 612 },
  { id: 'g-step', x1: 936, y1: 550, x2: 885, y2: 617 },
  { id: 'g-body', x1: 968, y1: 573, x2: 917, y2: 640 },
  { id: 'g-tail', x1: 1047, y1: 643, x2: 1004, y2: 699 },
]
</script>

<template>
  <div class="app">
    <header class="titlebar">
      <h1>- [chilun1444444.CATPart]</h1>
      <button class="minimise" aria-label="最小化"></button>
    </header>

    <nav class="menubar">
      <button v-for="m in menus" :key="m">{{ m }}</button>
    </nav>

    <div class="properties">
      <label v-for="c in combos" :key="c.label" class="combo" :class="c.size">
        <select :aria-label="c.label" :disabled="c.size === 'off'">
          <option>{{ c.value }}</option>
        </select>
        <svg viewBox="0 0 12 8"><path d="M1 1l5 5 5-5" /></svg>
      </label>
      <button class="tool" aria-label="格式刷"><svg viewBox="0 0 26 26" v-html="icons.brush"></svg></button>
      <button class="tool" aria-label="向导"><svg viewBox="0 0 26 26" v-html="icons.wizard"></svg></button>
    </div>

    <main class="stage">
      <svg class="scene" viewBox="0 101 1728 852">
        <defs>
          <linearGradient
            v-for="g in gradients"
            :id="g.id"
            :key="g.id"
            gradientUnits="userSpaceOnUse"
            :x1="g.x1"
            :y1="g.y1"
            :x2="g.x2"
            :y2="g.y2"
          >
            <stop offset="0" stop-color="#a68a5e" />
            <stop offset="0.14" stop-color="#b99c6e" />
            <stop offset="0.3" stop-color="#c2a676" />
            <stop offset="0.39" stop-color="#dccb9a" />
            <stop offset="0.45" stop-color="#f4ecc4" />
            <stop offset="0.51" stop-color="#f2e8be" />
            <stop offset="0.58" stop-color="#d8c492" />
            <stop offset="0.68" stop-color="#bea373" />
            <stop offset="0.84" stop-color="#ad9364" />
            <stop offset="1" stop-color="#8a7650" />
          </linearGradient>
        </defs>

        <path v-for="(s, i) in shaft" :key="i" :d="s.d" :fill="s.fill" />
        <path class="face" :d="curve(tailFace)" />
        <g class="outline">
          <path v-for="(e, i) in outlines" :key="i" :d="e" />
          <path d="M561 333L613 372M617 376L872 570M880 576L1126 763" />
        </g>

        <g class="planes">
          <path d="M753 434L791 462L767 503L729 474Z" />
          <path d="M760 449L783 447L760 488L737 490Z" />
          <path d="M732 455L752 455L790 482L768 483Z" />
        </g>

        <g class="compass">
          <path d="M1561 179L1569 173Q1583 153 1600 150Q1622 148 1638 159L1611 206L1583 208Q1563 195 1561 179Z" fill="#1d4560" />
          <path d="M1617 259L1646 256L1674 207Q1676 197 1665 198Q1654 200 1641 215Q1619 238 1617 259Z" fill="#14104e" />
          <path d="M1557 166L1645 233" />
          <circle cx="1557" cy="166" r="4" fill="#dcd4fa" />
          <rect x="1640" y="228" width="11" height="11" fill="#c80812" stroke="none" />
        </g>
        <g class="axis-text">
          <text x="1556" y="158">z</text>
          <text x="1635" y="153">y</text>
          <text x="1584" y="198">x</text>
        </g>
        <g class="corner">
          <text x="1712" y="903">z</text>
          <text x="1718" y="919">x</text>
          <path d="M1713 902l12 10" />
        </g>
        <path class="cursor" d="M1312 746v18l4-4 4 8 3-1-4-8h6z" />
      </svg>

      <ul class="tree">
        <li v-for="row in tree" :key="row.label" :class="row.kind">
          <svg v-if="row.kind === 'sketch'" class="icon-sketch" viewBox="0 0 70 39">
            <defs>
              <pattern id="mesh" width="3" height="3" patternUnits="userSpaceOnUse">
                <rect width="3" height="3" fill="#5e5e7a" />
                <rect width="2" height="2" fill="#c6c6d8" />
              </pattern>
              <pattern id="net" width="4" height="4" patternUnits="userSpaceOnUse">
                <rect width="4" height="4" fill="#101030" />
                <rect width="2" height="2" fill="#dcdcea" />
              </pattern>
            </defs>
            <path d="M6 -24V12M16 20H27" stroke="#fff" stroke-width="2" />
            <circle cx="6" cy="19" r="11" fill="#77777a" />
            <path d="M-1 19H13M6 12V26" stroke="#000" stroke-width="4" />
            <rect x="28" width="39" height="39" fill="url(#mesh)" />
            <path d="M32 9H50L47 22H32Z" fill="#e8e8f2" fill-opacity="0.6" stroke="#22222e" stroke-dasharray="2 1" />
            <path d="M57 1L40 23M59 5L46 22" stroke="#26262e" stroke-width="2" stroke-dasharray="3 1" />
            <path d="M55 13L64 36H46Z" fill="#eee" fill-opacity="0.6" stroke="#22222e" stroke-dasharray="2 1" />
            <rect v-if="!row.alert" x="28" y="23" width="17" height="16" fill="url(#net)" />
            <circle v-else cx="36" cy="31" r="7" fill="#a8a8c0" stroke="#8c2038" stroke-width="3" stroke-dasharray="3 1" />
          </svg>
          <svg v-else-if="row.kind === 'boss'" class="icon-feature" viewBox="0 0 32 33">
            <path d="M2 5L7 0H32L31 28L25 33H2Z" fill="#17104e" />
            <path d="M4 6H25V32H10Z" fill="#fff" />
            <path d="M3 10H16V20L7 28H0V15Z" fill="#16123c" />
            <path d="M0 17L6 11H14L8 18H0Z" fill="#fbf88a" />
            <path d="M0 20H6V27H0Z" fill="#f4ee70" />
          </svg>
          <svg v-else-if="row.kind === 'pocket'" class="icon-feature" viewBox="0 0 32 33">
            <path d="M0 3L4 0H32L31 26L25 32H0Z" fill="#17104e" />
            <path d="M0 0H30L25 5H0Z" fill="#4a4850" />
            <path d="M0 5H25V32H0Z" fill="#faf07e" />
            <path d="M2 11H13V17H20V27H10V21H2Z" fill="#1c1640" />
            <circle cx="4" cy="27" r="7" fill="#fff" stroke="#c02030" stroke-width="2" stroke-dasharray="4 2" />
            <path d="M4 23v8" stroke="#c02030" stroke-width="3" />
          </svg>
          <span>{{ row.label }}</span>
        </li>
      </ul>

      <section v-for="p in palettes" :key="p.id" class="palette" :class="p.id" :aria-label="p.title">
        <header>
          <h2>{{ p.title }}</h2>
          <button class="close" aria-label="关闭">×</button>
        </header>
        <div class="palette-body">
          <i class="grip"></i>
          <button v-for="t in p.tools" :key="t.icon" class="tool" :class="{ menu: t.menu }" :aria-label="t.label">
            <svg viewBox="0 0 26 26" v-html="icons[t.icon]"></svg>
          </button>
        </div>
      </section>
    </main>

    <div class="toolbar">
      <div v-for="(g, i) in groups" :key="i" class="group">
        <button
          v-for="t in g"
          :key="t.icon"
          class="tool"
          :class="{ menu: t.menu, narrow: t.narrow }"
          :aria-label="t.label"
        >
          <svg viewBox="0 0 26 26" v-html="icons[t.icon]"></svg>
        </button>
      </div>
    </div>

    <div class="status">
      <label for="command">命令</label>
      <input id="command" type="text" />
    </div>

    <footer class="taskbar">
      <input class="search" type="text" aria-label="搜索" placeholder="搜索应用、文档、网页等" />
      <div class="apps">
        <button
          v-for="t in tasks"
          :key="t.icon"
          class="app-button"
          :class="['app-' + t.icon, t.state]"
          :aria-label="t.label"
        >
          <svg :viewBox="t.icon === 'catia' ? '0 0 30 28' : '0 0 26 26'" v-html="icons[t.icon]"></svg>
          <span v-if="iconText[t.icon]" class="app-text">{{ iconText[t.icon] }}</span>
        </button>
        <p class="watermark">微信公众号 catia模具设计应用 出品</p>
      </div>
      <div class="tray">
        <button v-for="t in tray" :key="t.icon" :aria-label="t.label">
          <svg viewBox="0 0 26 26" v-html="icons[t.icon]"></svg>
        </button>
        <button class="ime">中</button>
        <button class="pinyin">拼</button>
        <div class="clock">
          <time class="hour">6:13</time>
          <time>2021/5/</time>
        </div>
      </div>
    </footer>
  </div>
</template>

<style>
html,
body {
  margin: 0;
  overflow: hidden;
}
</style>

<style scoped>
.app {
  display: flex;
  flex-direction: column;
  height: 100vh;
  overflow: hidden;
  font-family: 'Open Sans', 'Noto Sans CJK SC', sans-serif;
  color: #16161e;
}

button {
  margin: 0;
  padding: 0;
  border: 0;
  background: none;
  color: inherit;
  font: inherit;
}

svg {
  display: block;
}

.titlebar {
  display: flex;
  flex: none;
  align-items: center;
  justify-content: space-between;
  height: 29px;
  padding: 0 46px 0 3px;
  background: #0078d7;
}

.titlebar h1 {
  margin: 0;
  color: #b8f4fc;
  font-size: 16px;
  font-weight: 400;
  line-height: 26px;
}

.minimise {
  width: 13px;
  height: 1px;
  background: #cdeaff;
}

.menubar {
  display: flex;
  flex: none;
  gap: 17px;
  height: 24px;
  margin-left: -15px;
  background: #cfcde6;
  font-size: 15px;
  font-weight: 500;
  line-height: 23px;
  white-space: nowrap;
}

.menubar button {
  width: 31px;
}

.properties {
  display: flex;
  flex: none;
  gap: 3px;
  box-sizing: border-box;
  height: 48px;
  padding-top: 9px;
  border-bottom: 3px solid #74747c;
  background: linear-gradient(#ffffff 0, #f0f0f8 6px, #dad9ea 16px, #cccbe0 32px, #a9a9ba 100%);
}

.combo {
  position: relative;
  flex: none;
  width: 86px;
  height: 32px;
}

.combo select {
  width: 100%;
  height: 100%;
  padding: 0 24px 4px 6px;
  border: 1px solid #8c8c96;
  border-radius: 0;
  background: #fff;
  color: #16161e;
  font: 15px/20px 'Open Sans', 'Noto Sans CJK SC', sans-serif;
  appearance: none;
}

.combo svg {
  position: absolute;
  top: 14px;
  right: 5px;
  width: 12px;
  fill: none;
  stroke: #50505a;
  stroke-width: 1.5;
  pointer-events: none;
}

.combo.cut {
  width: 11px;
}

.combo.cut select {
  padding: 0;
  border-left: 0;
}

.combo.grey,
.combo.last {
  height: 30px;
}

.combo.grey select {
  padding-left: 4px;
  border-color: #c4c4cc;
  background: #dedee0;
}

.combo.last select {
  padding-left: 4px;
}

.combo.small {
  width: 56px;
}

.combo.off {
  width: 54px;
}

.combo.off select {
  border-color: #f4f4f8;
  background: #f2f2f4;
  color: #a2a2a6;
  opacity: 1;
}

.combo.off svg {
  stroke: #b4b4ba;
}

.properties .tool {
  width: 32px;
  height: 30px;
}

.properties .tool svg {
  margin: 0;
}

.tool {
  position: relative;
  flex: none;
  width: 35px;
  height: 26px;
}

.tool svg {
  width: 26px;
  height: 26px;
  margin: 0 auto;
}

.tool.menu::after {
  position: absolute;
  right: 0;
  bottom: -6px;
  border: 4px solid transparent;
  border-top: 5px solid #14142a;
  border-bottom: 0;
  content: '';
}

.stage {
  position: relative;
  flex: 1;
  min-height: 0;
  overflow: hidden;
  background: linear-gradient(#333364 0%, #39396c 28%, #434378 60%, #4b4a7c 66%, #646490 76%, #8382a6 87%, #abacc0 100%);
}

.scene {
  position: absolute;
  width: 100%;
  height: 100%;
}

.outline,
.face {
  fill: none;
  stroke: #0c0806;
  stroke-width: 2;
  stroke-linecap: round;
}

.face {
  fill: #7d6b4b;
}

.planes {
  fill: none;
  stroke: #fdf0dc;
}

.compass {
  fill: none;
  stroke: #d8d0f8;
  stroke-width: 2;
}

.axis-text,
.corner {
  font: 18px 'Noto Sans', sans-serif;
}

.axis-text {
  fill: #e4dc3c;
}

.corner {
  fill: #f2f2fa;
  stroke: #f2f2fa;
  stroke-width: 0;
}

.corner path {
  stroke-width: 2;
}

.cursor {
  fill: #fff;
  stroke: #111;
}

.tree {
  position: absolute;
  top: -10px;
  bottom: -36px;
  left: 0;
  display: flex;
  flex-direction: column;
  margin: 0;
  padding: 0;
  list-style: none;
}

.tree li {
  display: flex;
  flex: 1;
  align-items: center;
  min-height: 0;
}

.tree svg {
  flex: none;
  margin-top: 11px;
  overflow: visible;
}

.icon-sketch {
  width: 70px;
  height: 39px;
}

.icon-feature {
  width: 32px;
  height: 33px;
}

.tree span {
  padding: 0 2px 0 1px;
  border-radius: 3px;
  background: #333063;
  color: #fff;
  font-family: 'Liberation Sans', 'Noto Sans CJK SC', sans-serif;
  font-size: 25px;
  font-weight: 300;
  line-height: 36px;
  white-space: nowrap;
}

.boss span,
.pocket span {
  margin-left: 5px;
}

.tree .set span,
.tree .body span {
  margin-left: 3px;
  background: none;
}

.body span {
  text-decoration: underline;
  text-decoration-thickness: 2px;
}

.palette {
  position: absolute;
  width: 45px;
  box-shadow: 0 2px 12px rgba(20, 20, 40, 0.5);
}

.palette header {
  display: flex;
  align-items: center;
  box-sizing: border-box;
  height: 39px;
  padding: 4px 1px 0 9px;
  background: #0078d7;
}

.palette h2 {
  flex: 1;
  margin: 0 0 4px;
  overflow: hidden;
  color: #e4f4ff;
  font-size: 15px;
  font-weight: 400;
  line-height: 24px;
  white-space: nowrap;
}

.close {
  flex: none;
  width: 25px;
  height: 25px;
  background: #c75050;
  color: #fff;
  font-size: 17px;
  line-height: 24px;
}

.palette-body {
  display: flex;
  flex-direction: column;
  padding: 4px 0 2px;
  background: linear-gradient(90deg, #fafaff 0, #dcdcec 12px, #cfcde2 32px, #aeaec0 100%);
}

.palette .tool {
  width: 45px;
  height: 34px;
}

.palette .tool.menu {
  height: 38px;
}

.palette .tool svg {
  width: 25px;
  height: 25px;
  margin: 4px 0 0 10px;
}

.palette .tool.menu::after {
  right: 3px;
  bottom: -2px;
}

.grip {
  width: 20px;
  height: 3px;
  margin: 0 0 4px 4px;
  border-bottom: 1px solid #9c9cae;
  background: #fff;
}

.palette.render {
  top: 532px;
  right: 246px;
  width: 54px;
}

.render .palette-body {
  flex-direction: row;
  gap: 12px;
  height: 36px;
  background: linear-gradient(#ffffff 0, #dcdcec 14px, #cfcde2 30px, #a6a6b6 100%);
}

.render .grip {
  flex: none;
  width: 3px;
  height: 20px;
  margin: 0 0 0 5px;
  border-right: 1px solid #9c9cae;
  border-bottom: 0;
}

.render .tool {
  width: 26px;
}

.render .tool svg {
  margin: 4px 0 0;
}

.palette.operations {
  top: 380px;
  right: 109px;
}

.palette.surfaces {
  top: 372px;
  right: 23px;
}

.surfaces .tool {
  height: 35px;
}

.surfaces .palette-body {
  padding-bottom: 3px;
}

.toolbar {
  display: flex;
  flex: none;
  box-sizing: border-box;
  height: 48px;
  margin-left: -10px;
  padding-top: 13px;
  border-bottom: 2px solid #80808e;
  background: linear-gradient(#ffffff 0, #f6f6fb 5px, #dad9ea 14px, #cfcde2 32px, #a9a9b8 100%);
}

.group {
  display: flex;
  flex: none;
}

.group + .group::before {
  box-sizing: border-box;
  width: 3px;
  height: 20px;
  margin: -3px 7px 0 13px;
  border-right: 1px solid #a2a2b4;
  background: #f6f6fc;
  content: '';
}

.toolbar .tool.menu {
  width: 38px;
}

.toolbar .tool.narrow {
  width: 28px;
}

.toolbar .tool.menu svg {
  margin: 0 0 0 4px;
}

.toolbar .tool.menu::after {
  right: 1px;
}

.status {
  display: flex;
  flex: none;
  align-items: center;
  height: 29px;
  background: #cfcfe6;
  font-size: 15px;
}

.status label {
  flex: 1;
  margin-left: -16px;
}

.status input {
  box-sizing: border-box;
  width: 21%;
  height: 28px;
  border: 1px solid #7c7c88;
  background: #fff;
}

.taskbar {
  display: flex;
  flex: none;
  height: 50px;
  background: linear-gradient(90deg, #2d302c 0, #2e3029 55%, #37321f 72%, #2f2e27 85%, #2c2c26 100%);
}

.search {
  flex: none;
  box-sizing: border-box;
  width: 393px;
  padding: 0 14px;
  border: 0;
  border-top: 1px solid #c4c4c8;
  border-bottom: 1px solid #b4b4b4;
  background: #f2f2f2;
  font: 19px 'Open Sans', 'Noto Sans CJK SC', sans-serif;
}

.search::placeholder {
  color: #2c2c30;
  opacity: 1;
}

.apps {
  position: relative;
  display: flex;
}

.app-button {
  position: relative;
  display: flex;
  flex: none;
  align-items: center;
  justify-content: center;
  width: 62px;
}

.app-button svg {
  width: 28px;
  height: 28px;
}

.app-text {
  position: absolute;
  color: #fff;
  font-size: 12px;
  font-weight: 700;
  line-height: 16px;
}

.app-onenote .app-text {
  right: 35px;
}

.app-premiere .app-text {
  color: #d8a0ff;
}

.open::after,
.stacked::after,
.active::after {
  position: absolute;
  right: 5px;
  bottom: 0;
  left: 5px;
  height: 3px;
  background: #86b8e4;
  content: '';
}

.stacked::after {
  border-right: 10px solid #5f7f9c;
}

.active {
  background: #5c5a50;
}

.active::after {
  right: 0;
  left: 0;
}

.watermark {
  position: absolute;
  left: 279px;
  margin: 0;
  color: #ee1111;
  font: 700 29px/50px 'Open Sans', 'Noto Sans CJK SC', sans-serif;
  white-space: nowrap;
}

.tray {
  display: flex;
  align-items: center;
  margin-left: auto;
  color: #fff;
}

.tray button {
  flex: none;
  width: 30px;
}

.tray svg {
  width: 22px;
  height: 22px;
  margin: 0 auto;
}

.tray .ime {
  font-size: 17px;
  font-weight: 500;
}

.tray .pinyin {
  width: 20px;
  height: 20px;
  margin-left: 10px;
  background: #fff;
  color: #111;
  font-size: 16px;
  line-height: 20px;
}

.clock {
  display: flex;
  flex-direction: column;
  width: 54px;
  margin-left: 22px;
  overflow: hidden;
  font-size: 16px;
  line-height: 24px;
  white-space: nowrap;
}

.hour {
  padding-left: 22px;
}
</style>
